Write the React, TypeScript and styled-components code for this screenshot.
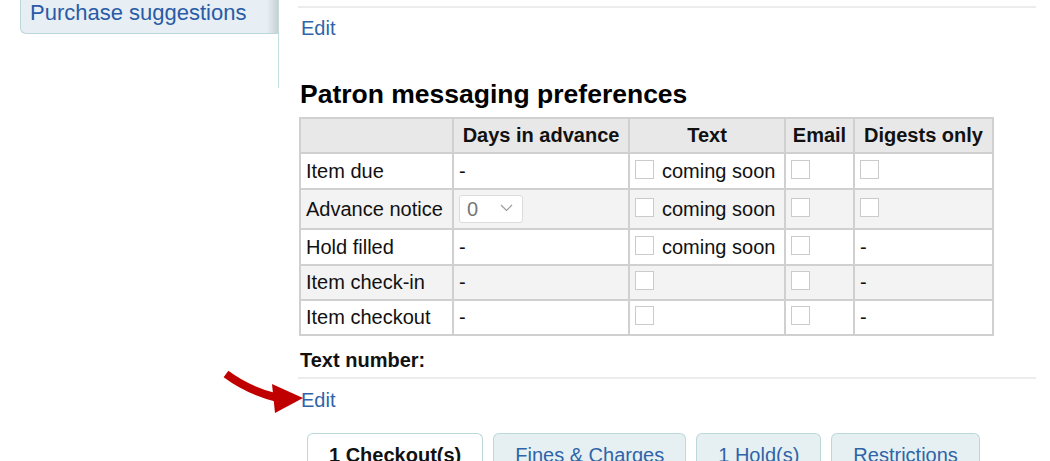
import React from "react";
import styled, { createGlobalStyle } from "styled-components";

const GlobalStyle = createGlobalStyle`
  html, body { margin: 0; padding: 0; background: #ffffff; }
  body { font-family: "Liberation Sans", Arial, sans-serif; color: #000; }
`;

const Page = styled.div`
  position: relative;
  display: flex;
  align-items: flex-start;
  width: 1050px;
  height: 461px;
  overflow: hidden;
  background: #fff;
`;

const Sidebar = styled.nav`
  flex: none;
  width: 279px;
  height: 88px;
  box-sizing: border-box;
  border-right: 1px solid #c3dcdd;
`;

const MenuItem = styled.a`
  display: block;
  margin-left: 20px;
  width: 258px;
  height: 34px;
  box-sizing: border-box;
  padding: 0 0 0 9px;
  font-size: 22px;
  line-height: 25px;
  color: #2a5ba6;
  text-decoration: none;
  border-left: 1px solid #bcd7da;
  border-bottom: 1px solid #bcd7da;
  border-radius: 0 0 0 6px;
  background: linear-gradient(to right, #e7eef4 0, #e7eef4 calc(100% - 11px), #c9d0d5 100%);
`;

const Main = styled.main`
  flex: none;
  margin-left: 19px;
  width: 738px;
  display: flex;
  flex-direction: column;
  align-items: flex-start;
`;

const Rule = styled.div<{ $top: number }>`
  align-self: stretch;
  height: 2px;
  margin-top: ${(p) => p.$top}px;
  background: #ececec;
`;

const EditLink = styled.a<{ $top: number }>`
  display: block;
  margin-top: ${(p) => p.$top}px;
  margin-left: 3px;
  font-size: 20px;
  line-height: 23px;
  color: #2f64a8;
  text-decoration: none;
`;

const Heading = styled.h2`
  margin: 39px 0 0 2px;
  font-size: 26.5px;
  line-height: 30px;
  font-weight: bold;
  color: #000;
`;

const Table = styled.table`
  margin: 8px 0 0 1px;
  border-collapse: collapse;
  table-layout: fixed;
  width: 693px;
  font-size: 20px;
  line-height: 23px;
`;

const Row = styled.tr<{ $alt?: boolean; $h: number }>`
  height: ${(p) => p.$h}px;
  background: ${(p) => (p.$alt ? "#f3f3f3" : "#ffffff")};
`;

const Th = styled.th`
  background: #e8e8e8;
  border: 2px solid #d0d0d0;
  padding: 0 5px;
  font-weight: bold;
  text-align: center;
  white-space: nowrap;
  color: #111;
`;

const Td = styled.td`
  border: 2px solid #d0d0d0;
  padding: 0 5px;
  text-align: left;
  vertical-align: middle;
  white-space: nowrap;
  color: #111;
`;

const Check = styled.span`
  display: inline-block;
  width: 17px;
  height: 17px;
  border: 1px solid #cbcbcb;
  background: #fff;
  vertical-align: -1px;
  margin-right: 8px;
`;

const Select = styled.span`
  display: inline-flex;
  align-items: center;
  justify-content: space-between;
  box-sizing: border-box;
  width: 64px;
  height: 28px;
  padding: 0 9px 0 7px;
  border: 1px solid #dcdcdc;
  border-radius: 3px;
  background: #fff;
  color: #777;
  font-size: 20px;
  vertical-align: middle;
`;

const Chevron = styled.svg`
  width: 13px;
  height: 8px;
  margin-top: -3px;
`;

const Label = styled.div`
  margin: 13px 0 0 2px;
  font-size: 20px;
  line-height: 23px;
  font-weight: bold;
  color: #111;
`;

const Tabs = styled.div`
  display: flex;
  gap: 10px;
  margin: 21px 0 0 9px;
`;

const Tab = styled.a<{ $active?: boolean }>`
  display: block;
  height: 40px;
  padding: 10px 21px 0;
  border: 1px solid #bcd8da;
  border-bottom: none;
  border-radius: 6px 6px 0 0;
  background: ${(p) => (p.$active ? "#ffffff" : "#e6f0f2")};
  color: ${(p) => (p.$active ? "#111" : "#2f64a8")};
  font-weight: ${(p) => (p.$active ? "bold" : "normal")};
  font-size: 20px;
  line-height: 23px;
  text-decoration: none;
  white-space: nowrap;
`;

const Arrow = styled.svg`
  position: absolute;
  left: 215px;
  top: 362px;
  width: 92px;
  height: 56px;
  pointer-events: none;
`;

const Box = () => <Check />;

export default function App() {
  return (
    <>
      <GlobalStyle />
      <Page>
        <Sidebar>
          <MenuItem href="#">Purchase suggestions</MenuItem>
        </Sidebar>
        <Main>
          <Rule $top={6} />
          <EditLink $top={9} href="#">Edit</EditLink>
          <Heading>Patron messaging preferences</Heading>
          <Table>
            <colgroup>
              <col style={{ width: 153 }} />
              <col style={{ width: 176 }} />
              <col style={{ width: 156 }} />
              <col style={{ width: 69 }} />
              <col style={{ width: 139 }} />
            </colgroup>
            <thead>
              <Row $h={35}>
                <Th>&nbsp;</Th>
                <Th>Days in advance</Th>
                <Th>Text</Th>
                <Th>Email</Th>
                <Th>Digests only</Th>
              </Row>
            </thead>
            <tbody>
              <Row $h={36}>
                <Td>Item due</Td>
                <Td>-</Td>
                <Td><Box />coming soon</Td>
                <Td><Box /></Td>
                <Td><Box /></Td>
              </Row>
              <Row $h={40} $alt>
                <Td>Advance notice</Td>
                <Td>
                  <Select>
                    0
                    <Chevron viewBox="0 0 13 8">
                      <polyline points="1,1 6.5,6.5 12,1" fill="none" stroke="#9a9a9a" strokeWidth="1.2" />
                    </Chevron>
                  </Select>
                </Td>
                <Td><Box />coming soon</Td>
                <Td><Box /></Td>
                <Td><Box /></Td>
              </Row>
              <Row $h={36}>
                <Td>Hold filled</Td>
                <Td>-</Td>
                <Td><Box />coming soon</Td>
                <Td><Box /></Td>
                <Td>-</Td>
              </Row>
              <Row $h={35} $alt>
                <Td>Item check-in</Td>
                <Td>-</Td>
                <Td><Box /></Td>
                <Td><Box /></Td>
                <Td>-</Td>
              </Row>
              <Row $h={35}>
                <Td>Item checkout</Td>
                <Td>-</Td>
                <Td><Box /></Td>
                <Td><Box /></Td>
                <Td>-</Td>
              </Row>
            </tbody>
          </Table>
          <Label>Text number:</Label>
          <Rule $top={5} />
          <EditLink $top={10} href="#">Edit</EditLink>
          <Tabs>
            <Tab $active href="#">1 Checkout(s)</Tab>
            <Tab href="#">Fines &amp; Charges</Tab>
            <Tab href="#">1 Hold(s)</Tab>
            <Tab href="#">Restrictions</Tab>
          </Tabs>
        </Main>
        <Arrow viewBox="215 362 92 56">
          <path d="M226,374 Q249,391 278,398" fill="none" stroke="#c00000" strokeWidth="8" />
          <polygon points="272,384 303,398 275,413" fill="#c00000" />
        </Arrow>
      </Page>
    </>
  );
}
